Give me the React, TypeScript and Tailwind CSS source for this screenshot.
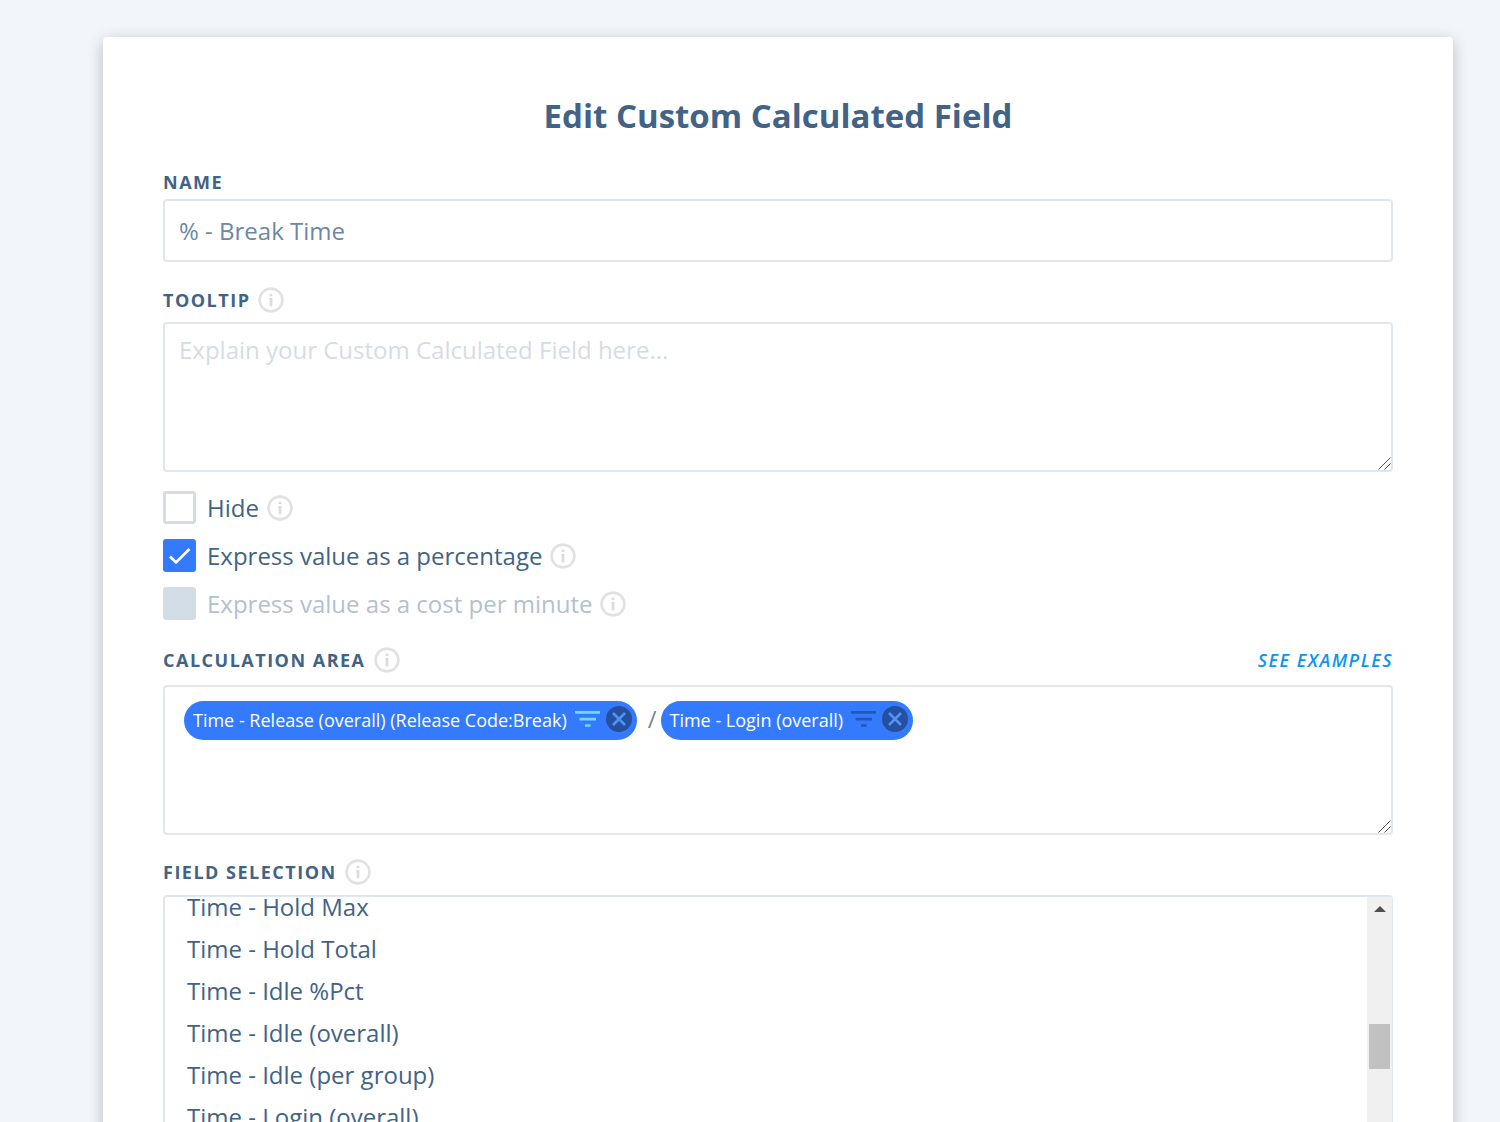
import React, { useLayoutEffect, useRef, useState } from 'react';

const FIELDS = [
  'Time - Hold Max',
  'Time - Hold Total',
  'Time - Idle %Pct',
  'Time - Idle (overall)',
  'Time - Idle (per group)',
  'Time - Login (overall)',
];

function InfoIcon() {
  return (
    <svg width="26" height="26" viewBox="0 0 26 26" fill="none" className="shrink-0" aria-hidden="true">
      <circle cx="13" cy="13" r="11.4" stroke="#e2e2e2" strokeWidth="2.6" />
      <path d="M11.6 6.8h2.8v2.4h-2.8zM11.2 11h3.2v8.2h-2.8v-6.6h-.4z" fill="#dcdcdc" />
    </svg>
  );
}

function FilterIcon({ active }: { active: boolean }) {
  return (
    <svg width="26" height="18" viewBox="0 0 26 18" className={active ? 'text-[#72d9fb]' : 'text-[#2558b5]'} aria-hidden="true">
      <path d="M0 1h25v2.8H0zM4.5 7.8H21v2.6H4.5zM10 14.2h5.5v2.6H10z" fill="currentColor" />
    </svg>
  );
}

function RemoveIcon() {
  return (
    <svg width="26" height="26" viewBox="0 0 26 26" aria-hidden="true">
      <circle cx="13" cy="13" r="13" fill="#264f9f" />
      <path d="M7 7l12 12M19 7l-12 12" stroke="#4d94f5" strokeWidth="2.6" />
    </svg>
  );
}

function ResizeGrip() {
  return (
    <svg width="13" height="13" viewBox="0 0 13 13" className="pointer-events-none absolute right-0.5 bottom-0.5" aria-hidden="true">
      <path d="M.5 12.5l12-12M6.5 12.5l6-6" stroke="#555" strokeWidth="1" />
    </svg>
  );
}

function Label({ htmlFor, id, children }: { htmlFor?: string; id?: string; children: React.ReactNode }) {
  return (
    <label htmlFor={htmlFor} id={id} className="text-[18px] leading-6 font-bold tracking-[1.5px] text-[#426385] uppercase">
      {children}
    </label>
  );
}

function Chip({ text, filtered }: { text: string; filtered: boolean }) {
  return (
    <span className="flex h-[39px] items-center rounded-full bg-[#347aff] pr-[5px] pl-[9px] text-[18px] font-medium text-white">
      {text}
      <span className="ml-2 flex items-center gap-[5px] pb-[3px]">
        <button type="button" aria-label="Filter" className="flex">
          <FilterIcon active={filtered} />
        </button>
        <button type="button" aria-label="Remove" className="flex">
          <RemoveIcon />
        </button>
      </span>
    </span>
  );
}

function CheckRow({ id, label, defaultChecked, disabled }: { id: string; label: string; defaultChecked?: boolean; disabled?: boolean }) {
  const [checked, setChecked] = useState(!!defaultChecked);
  return (
    <div className="flex h-[33px] items-center">
      <span className="relative flex">
        <input
          id={id}
          type="checkbox"
          checked={checked}
          disabled={disabled}
          onChange={e => setChecked(e.target.checked)}
          className="size-[33px] appearance-none rounded-[3px] border-3 border-[#d3dde7] bg-white checked:border-[#347aff] checked:bg-[#347aff] disabled:bg-[#d3dde7]"
        />
        {checked && (
          <svg viewBox="0 0 33 33" fill="none" className="pointer-events-none absolute inset-0" aria-hidden="true">
            <path d="M7 17.5l6 6L26.5 10" stroke="#fff" strokeWidth="2.6" />
          </svg>
        )}
      </span>
      <label htmlFor={id} className={disabled ? 'mr-2 ml-[11px] text-[24px] text-[#b1c1d1]' : 'mr-2 ml-[11px] text-[24px] text-[#426385]'}>
        {label}
      </label>
      <InfoIcon />
    </div>
  );
}

export default function App() {
  const [name, setName] = useState('% - Break Time');
  const listRef = useRef<HTMLUListElement>(null);

  // open the list scrolled to its end
  useLayoutEffect(() => {
    if (listRef.current) listRef.current.scrollTop = listRef.current.scrollHeight;
  }, []);

  return (
    <div className="h-screen overflow-hidden bg-[#f2f5fa] pt-[37px] pr-[47px] pl-[103px] font-['Open_Sans',sans-serif]">
      <form className="rounded bg-white px-[60px] pt-14 pb-[60px] shadow-[0_4px_16px_rgba(0,0,0,0.24)]">
        <h1 className="text-center text-[33px] leading-[45px] font-bold text-[#426385]">Edit Custom Calculated Field</h1>

        <div className="mt-8 flex flex-col">
          <Label htmlFor="name">Name</Label>
          <input
            id="name"
            value={name}
            onChange={e => setName(e.target.value)}
            className="mt-[5px] h-[63px] rounded border-2 border-[#dfe8f0] px-3.5 text-[24px] text-[#6e88a4] outline-none"
          />
        </div>

        <div className="mt-6 flex h-7 items-center gap-2">
          <Label htmlFor="tooltip">Tooltip</Label>
          <InfoIcon />
        </div>
        <div className="relative mt-2 flex">
          <textarea
            id="tooltip"
            placeholder="Explain your Custom Calculated Field here..."
            className="h-[150px] w-full resize-none rounded border-2 border-[#dfe8f0] px-3.5 py-2.5 text-[24px] leading-8 text-[#6e88a4] outline-none placeholder:text-[#d3dde8]"
          />
          <ResizeGrip />
        </div>

        <div className="mt-[19px] flex flex-col gap-[15px]">
          <CheckRow id="hide" label="Hide" />
          <CheckRow id="percentage" label="Express value as a percentage" defaultChecked />
          <CheckRow id="cost" label="Express value as a cost per minute" disabled />
        </div>

        <div className="mt-[26px] flex h-7 items-center gap-2">
          <Label id="calculation">Calculation Area</Label>
          <InfoIcon />
          <a href="#examples" className="ml-auto text-[18px] leading-6 font-semibold tracking-[1.5px] text-[#0a94f5] uppercase italic">
            See Examples
          </a>
        </div>
        <div className="relative mt-[11px]">
          <div
            role="group"
            aria-labelledby="calculation"
            className="flex h-[150px] items-start rounded border-2 border-[#dfe8f0] px-[19px] py-3.5 text-[#6e88a4]"
          >
            <Chip text="Time - Release (overall) (Release Code:Break)" filtered />
            <span className="mr-1 ml-[11px] text-[24px] leading-9">/</span>
            <Chip text="Time - Login (overall)" filtered={false} />
          </div>
          <ResizeGrip />
        </div>

        <div className="mt-[23px] flex h-7 items-center gap-2">
          <Label id="fields">Field Selection</Label>
          <InfoIcon />
        </div>
        <div className="mt-[9px] flex h-[245px] overflow-hidden rounded border-2 border-r border-[#dfe8f0]">
          <ul ref={listRef} aria-labelledby="fields" className="flex-1 overflow-y-auto [scrollbar-width:none]">
            {FIELDS.map(field => (
              <li key={field}>
                <button type="button" className="block h-[42px] w-full px-[22px] text-left text-[24px] text-[#426385]">
                  {field}
                </button>
              </li>
            ))}
          </ul>
          <div className="flex w-[25px] flex-col items-center bg-[#f0f0f0]" aria-hidden="true">
            <svg width="12" height="6" viewBox="0 0 12 6" className="mt-[9px]">
              <path d="M0 6l6-6 6 6z" fill="#505050" />
            </svg>
            <div className="mt-28 h-[45px] w-[21px] bg-[#c1c1c1]" />
          </div>
        </div>
      </form>
    </div>
  );
}
